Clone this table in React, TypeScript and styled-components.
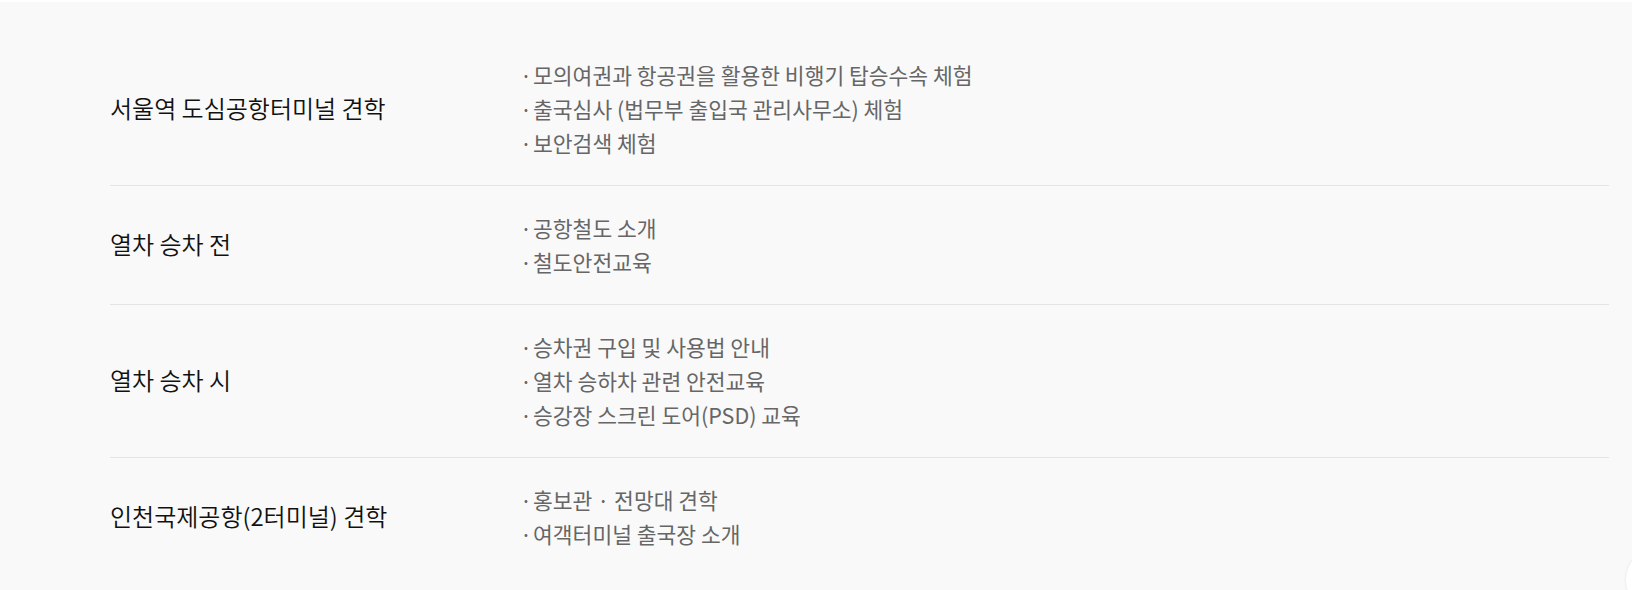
import styled, { createGlobalStyle } from 'styled-components';

const GlobalStyle = createGlobalStyle`
  html, body {
    margin: 0;
    padding: 0;
    background: #ffffff;
    overflow: hidden;
  }
  body {
    font-family: "Noto Sans CJK KR", "Noto Sans", sans-serif;
  }
`;

const Section = styled.section`
  margin-top: 2px;
  min-height: 588px;
  background: #f9f9f9;
  padding: 31px 23px 0 110px;
  box-sizing: border-box;
`;

const List = styled.ul`
  list-style: none;
  margin: 0;
  padding: 0;
`;

const Row = styled.li`
  display: grid;
  grid-template-columns: 410px 1fr;
  align-items: center;
  padding: 25px 0;
  border-top: 1px solid #e4e4e4;

  &:first-child {
    border-top: none;
  }
`;

const Title = styled.h3`
  margin: 0 0 3px;
  font-size: 24px;
  font-weight: 350;
  color: #111111;
`;

const Items = styled.ul`
  list-style: none;
  margin: 0;
  padding: 0;
`;

const Item = styled.li`
  font-size: 21.5px;
  line-height: 34px;
  color: #666666;

  &::before {
    content: '·';
    margin-right: 1px;
  }
`;

const FloatButton = styled.div`
  position: fixed;
  left: 1626px;
  top: 547px;
  width: 66px;
  height: 66px;
  border-radius: 50%;
  background: #ffffff;
  box-shadow: 0 0 3px rgba(0, 0, 0, 0.1);
`;

const programs = [
  {
    title: '서울역 도심공항터미널 견학',
    items: [
      '모의여권과 항공권을 활용한 비행기 탑승수속 체험',
      '출국심사 (법무부 출입국 관리사무소) 체험',
      '보안검색 체험',
    ],
  },
  {
    title: '열차 승차 전',
    items: ['공항철도 소개', '철도안전교육'],
  },
  {
    title: '열차 승차 시',
    items: ['승차권 구입 및 사용법 안내', '열차 승하차 관련 안전교육', '승강장 스크린 도어(PSD) 교육'],
  },
  {
    title: '인천국제공항(2터미널) 견학',
    items: ['홍보관 · 전망대 견학', '여객터미널 출국장 소개'],
  },
];

export default function App() {
  return (
    <>
      <GlobalStyle />
      <Section>
        <List>
          {programs.map((p) => (
            <Row key={p.title}>
              <Title>{p.title}</Title>
              <Items>
                {p.items.map((it) => (
                  <Item key={it}>{it}</Item>
                ))}
              </Items>
            </Row>
          ))}
        </List>
      </Section>
      <FloatButton />
    </>
  );
}
